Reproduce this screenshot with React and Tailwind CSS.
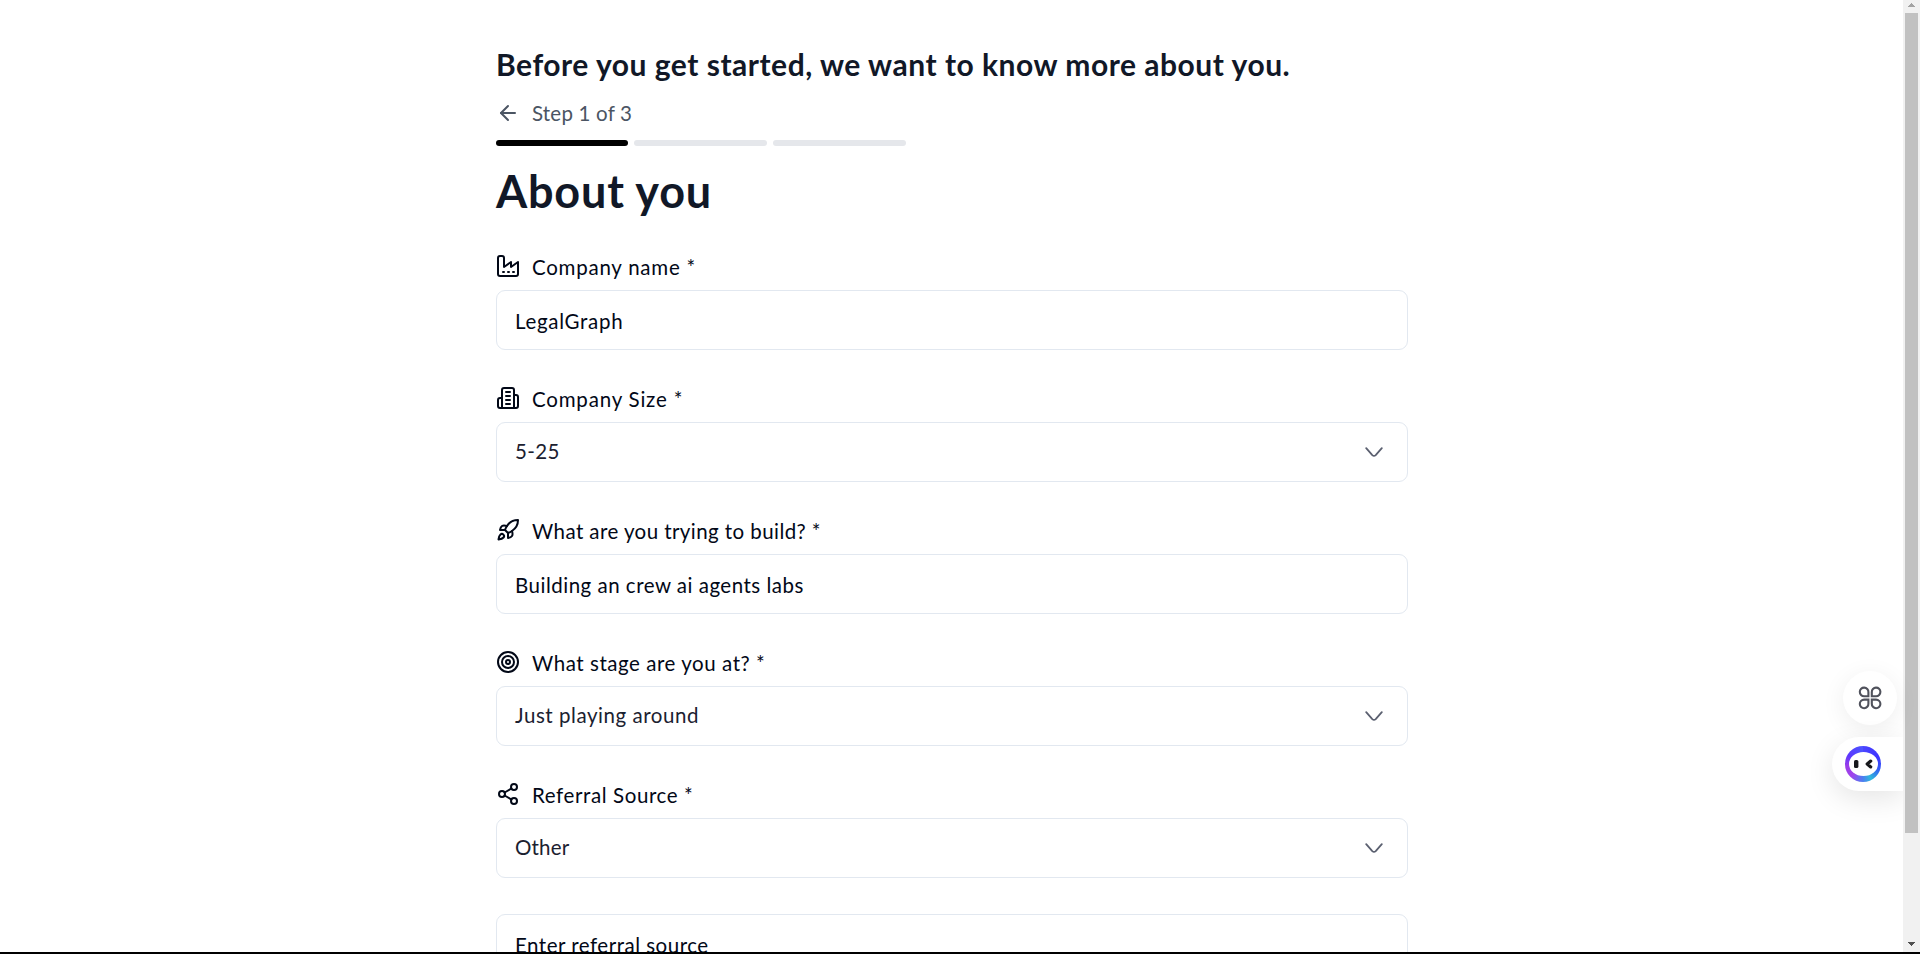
import { ArrowLeft, Rocket, Target, Share2 } from "lucide-react";

function Icon({ children }) {
  return (
    <svg width="24" height="24" viewBox="0 0 24 24" fill="none" stroke="currentColor" strokeWidth="2" strokeLinecap="round" strokeLinejoin="round" className="shrink-0">
      {children}
    </svg>
  );
}

function FactoryIcon() {
  return (
    <Icon>
      <path d="M2 20a2 2 0 0 0 2 2h16a2 2 0 0 0 2-2V8l-7 5V8l-7 5V4a2 2 0 0 0-2-2H4a2 2 0 0 0-2 2Z" />
      <path d="M17 18h1M12 18h1M7 18h1" />
    </Icon>
  );
}

function BuildingIcon() {
  return (
    <Icon>
      <path d="M6 22V4a2 2 0 0 1 2-2h8a2 2 0 0 1 2 2v18Z" />
      <path d="M6 12H4a2 2 0 0 0-2 2v6a2 2 0 0 0 2 2h2" />
      <path d="M18 9h2a2 2 0 0 1 2 2v9a2 2 0 0 1-2 2h-2" />
      <path d="M10 6h4M10 10h4M10 14h4M10 18h4" />
    </Icon>
  );
}

const label = "text-[20.5px] leading-6 whitespace-nowrap";

function Box({ value, select, track }) {
  return (
    <div className="flex h-[60px] w-full shrink-0 items-center justify-between rounded-[9px] border border-[#e2e8f0] bg-white pl-[18px] pr-6">
      <span className={`${label} ${track} ${select ? "pb-[2px] text-[#1b2130]" : "pt-[2px] text-[#020817]"}`}>{value}</span>
      {select && (
        <svg width="18" height="11" viewBox="0 0 18 11" fill="none" stroke="#5b6070" strokeWidth="1.8" strokeLinecap="round" strokeLinejoin="round">
          <path d="M1.2 1.2l6.1 6.9q1.7 1.6 3.4 0L16.8 1.2" />
        </svg>
      )}
    </div>
  );
}

function Field({ icon, title, titleTrack, ...box }) {
  return (
    <div className="flex flex-col gap-3">
      <div className="flex h-6 items-center gap-3 text-[#020817]">
        {icon}
        <span className={`${label} pt-[2px] ${titleTrack}`}>{title}</span>
      </div>
      <Box {...box} />
    </div>
  );
}

function Scrollbar() {
  return (
    <div className="flex h-full w-[17px] shrink-0 flex-col items-center bg-[#f1f1f1]">
      <div className="flex h-[13px] w-full justify-center pt-[3px]">
        <svg width="7" height="4" viewBox="0 0 7 4" shapeRendering="crispEdges"><path d="M3 0h1v1h1v1h1v1h1v1H0V3h1V2h1V1h1z" fill="#a3a3a3" /></svg>
      </div>
      <div className="h-[820px] w-[13px] bg-[#c1c1c1]" />
      <div className="mt-[109px] flex w-full justify-center">
        <svg width="7" height="4" viewBox="0 0 7 4" shapeRendering="crispEdges"><path d="M0 0h7v1H6v1H5v1H4v1H3V3H2V2H1V1H0z" fill="#505050" /></svg>
      </div>
    </div>
  );
}

function Widgets() {
  return (
    <div className="absolute right-[17px] top-[671px] flex flex-col items-end gap-3">
      <div className="mr-[6px] flex size-[54px] items-center justify-center rounded-full bg-white shadow-[0_5px_24px_rgba(0,0,0,0.07)]">
        <svg width="24" height="24" viewBox="0 0 24 24" fill="none" stroke="#50525c" strokeWidth="2.1">
          <path d="M10.4 10.2V6.1A4.3 4.3 0 1 0 6.1 10.2Z" />
          <path d="M13.8 10.2V6.1A4.3 4.3 0 1 1 18.1 10.2Z" />
          <path d="M10.4 13.6V17.7A4.3 4.3 0 1 1 6.1 13.6Z" />
          <path d="M13.8 13.6V17.7A4.3 4.3 0 1 0 18.1 13.6Z" />
        </svg>
      </div>
      <div className="flex h-[54px] w-[71px] items-center rounded-l-full bg-white pl-[13px] shadow-[0_8px_28px_rgba(0,0,0,0.1)] [clip-path:inset(-60px_0_-60px_-60px)]">
        <div className="flex size-9 items-center justify-center rounded-full bg-[conic-gradient(from_0deg,#4b45ff,#3c32ff_18%,#335cf5_30%,#2eb8dc_42%,#4b7ff0_50%,#a044ec_62%,#9b3ce8_73%,#5a38ff_84%,#4b55ff)]">
          <div className="flex h-6 w-[29px] items-center justify-center rounded-[50%] bg-white">
            <svg width="20" height="10" viewBox="0 0 20 10" fill="none">
              <rect x="1" y="1" width="4.4" height="8" rx="1.6" fill="#17181c" />
              <path d="M17.7 2.1L14.2 5l3.5 2.9" stroke="#17181c" strokeWidth="3.2" strokeLinecap="round" strokeLinejoin="round" />
            </svg>
          </div>
        </div>
      </div>
    </div>
  );
}

export default function App() {
  return (
    <div className="h-[954px] w-full overflow-hidden bg-black pb-[2px] font-['Lato',sans-serif]">
      <div className="relative flex h-[952px] overflow-hidden bg-white">
        <main className="flex min-w-0 flex-1 flex-col items-start overflow-hidden pl-[496px] pt-11">
          <h2 className="h-10 whitespace-nowrap text-[30px] font-bold leading-10 tracking-[0.52px] text-[#111827]">
            Before you get started, we want to know more about you.
          </h2>
          <div className="mt-[17px] flex h-6 items-center gap-3 text-[#4b5563]">
            <ArrowLeft size={24} />
            <span className="whitespace-nowrap text-[20.5px] leading-6 tracking-[0.2px]">Step 1 of 3</span>
          </div>
          <div className="mt-[15px] flex gap-[6px]">
            <div className="h-[6px] w-[132px] rounded-full bg-black" />
            <div className="h-[6px] w-[133px] rounded-full bg-[#e5e7eb]" />
            <div className="h-[6px] w-[133px] rounded-full bg-[#e5e7eb]" />
          </div>
          <h1 className="mt-[20px] h-[50px] whitespace-nowrap text-[45px] font-bold leading-[50px] tracking-[0.8px] text-[#111827]">About you</h1>
          <form className="mt-[38px] flex w-[912px] flex-col gap-9">
            <Field icon={<FactoryIcon />} title="Company name *" titleTrack="tracking-[0.75px]" value="LegalGraph" track="tracking-[0.7px]" />
            <Field icon={<BuildingIcon />} title="Company Size *" titleTrack="tracking-[0.8px]" value="5-25" track="tracking-[0.35px]" select />
            <Field icon={<Rocket size={24} />} title="What are you trying to build? *" titleTrack="tracking-[0.43px]" value="Building an crew ai agents labs" track="tracking-[0.5px]" />
            <Field icon={<Target size={24} />} title="What stage are you at? *" titleTrack="tracking-[0.55px]" value="Just playing around" track="tracking-[0.55px]" select />
            <Field icon={<Share2 size={24} />} title="Referral Source *" titleTrack="tracking-[0.6px]" value="Other" track="tracking-[0.2px]" select />
            <Box value="Enter referral source" track="tracking-[0.5px]" />
          </form>
        </main>
        <Scrollbar />
        <Widgets />
      </div>
    </div>
  );
}
